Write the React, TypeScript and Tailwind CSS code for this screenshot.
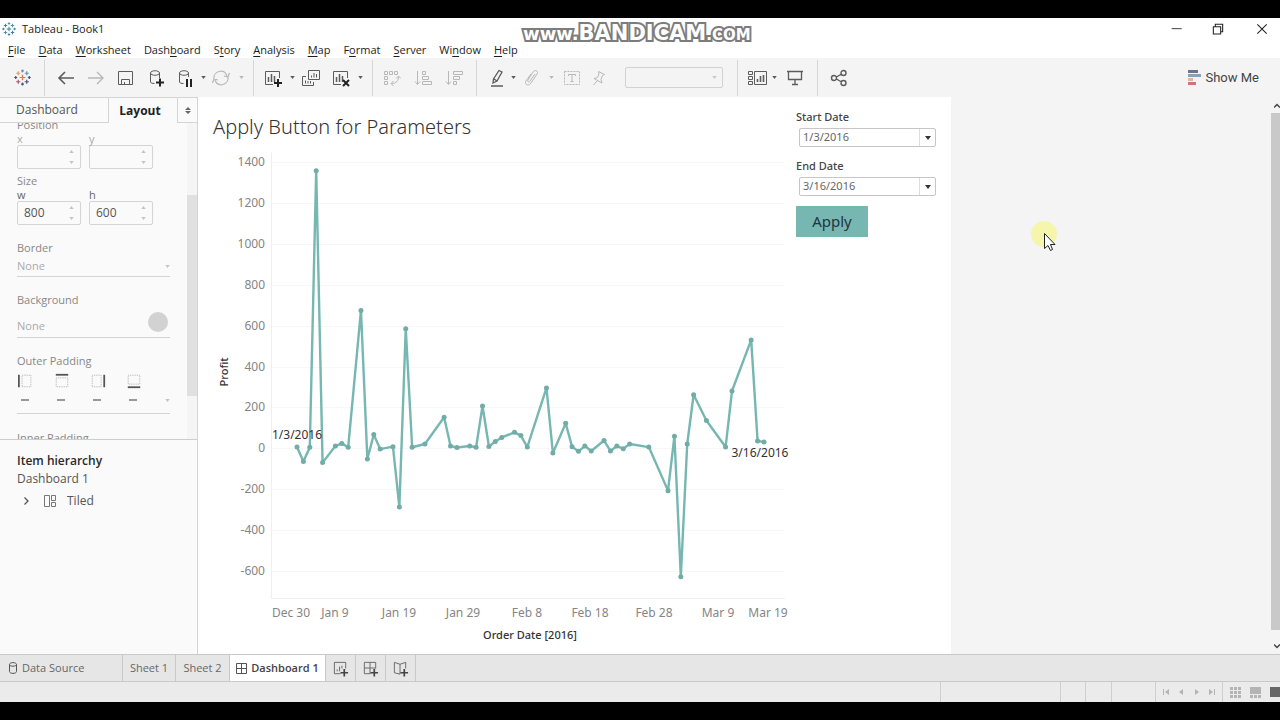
import type { ReactNode } from "react";

const menus = [
  ["", "F", "ile"],
  ["", "D", "ata"],
  ["", "W", "orksheet"],
  ["Dash", "b", "oard"],
  ["S", "t", "ory"],
  ["", "A", "nalysis"],
  ["", "M", "ap"],
  ["F", "o", "rmat"],
  ["", "S", "erver"],
  ["Wi", "n", "dow"],
  ["", "H", "elp"],
];

// [days since Jan 3, profit]
const profit: [number, number][] = [
  [0, 6], [1, -65], [2, 5], [3, 1357], [4, -70], [6, 11], [7, 24], [8, 5], [10, 674], [11, -52],
  [12, 67], [13, -4], [15, 8], [16, -287], [17, 585], [18, 5], [20, 21], [23, 152], [24, 11], [25, 4],
  [27, 11], [28, 5], [29, 207], [30, 9], [31, 33], [32, 53], [34, 78], [35, 62], [36, 6], [39, 295],
  [40, -23], [42, 122], [43, 8], [44, -15], [45, 11], [46, -13], [48, 38], [49, -13], [50, 11], [51, -2],
  [52, 21], [55, 6], [58, -207], [59, 59], [60, -628], [61, 21], [62, 262], [64, 136], [67, 6], [68, 280],
  [71, 530], [72, 36], [73, 31],
];

const yTicks = [1400, 1200, 1000, 800, 600, 400, 200, 0, -200, -400, -600];
const xTicks: [string, number][] = [
  ["Dec 30", 78],
  ["Jan 9", 122],
  ["Jan 19", 186],
  ["Jan 29", 250],
  ["Feb 8", 314],
  ["Feb 18", 377],
  ["Feb 28", 441],
  ["Mar 9", 505],
  ["Mar 19", 555],
];

const px = (day: number) => 84 + day * 6.397;
const py = (value: number) => 298.3 - value * 0.2045;

function Icon({ size = 18, className = "", children }: { size?: number; className?: string; children: ReactNode }) {
  return (
    <svg
      width={size}
      height={size}
      viewBox="0 0 18 18"
      fill="none"
      stroke="currentColor"
      className={`shrink-0 ${className}`}
      aria-hidden="true"
    >
      {children}
    </svg>
  );
}

function Caret({ small = false, className = "" }: { small?: boolean; className?: string }) {
  return (
    <svg
      width={small ? 5 : 6}
      height={small ? 3 : 4}
      viewBox="0 0 6 4"
      fill="currentColor"
      className={`shrink-0 ${className}`}
      aria-hidden="true"
    >
      <path d="M0 0h6L3 4z" />
    </svg>
  );
}

function Tool({ label, width = "w-[30px]", faded = false, children }: { label: string; width?: string; faded?: boolean; children: ReactNode }) {
  return (
    <button
      type="button"
      aria-label={label}
      disabled={faded}
      className={`flex h-8 shrink-0 items-center justify-center ${width} ${faded ? "text-[#b8b8b8]" : "text-[#5c5c5c]"}`}
    >
      {children}
    </button>
  );
}

function Group({ className, children }: { className: string; children: ReactNode }) {
  return <div className={`flex h-9 shrink-0 items-center border-l border-[#d6d6d6] ${className}`}>{children}</div>;
}

function Logo({ size, colors }: { size: number; colors: string[] }) {
  const plus = (x: number, y: number, r: number, c: string) => (
    <path key={`${x}-${y}`} d={`M${x - r} ${y}h${r * 2}M${x} ${y - r}v${r * 2}`} stroke={c} strokeWidth="1.300" />
  );
  return (
    <Icon size={size}>
      {plus(9, 9, 3, colors[0])}
      {plus(4.5, 4.5, 2.2, colors[1])}
      {plus(13.5, 4.5, 2.2, colors[2])}
      {plus(4.5, 13.5, 2.2, colors[3])}
      {plus(13.5, 13.5, 2.2, colors[4])}
      {plus(9, 2, 1.6, colors[2])}
      {plus(9, 16, 1.6, colors[4])}
      {plus(1.8, 9, 1.6, colors[4])}
      {plus(16.2, 9, 1.6, colors[4])}
    </Icon>
  );
}

function TitleBar() {
  return (
    <div className="relative flex h-[22px] shrink-0 items-center bg-white pl-[2px]">
      <Logo size={14} colors={["#3f7fa8", "#3f7fa8", "#4f93ad", "#4f93ad", "#3f7fa8"]} />
      <h1 className="ml-1.5 text-[11px] text-[#222]">Tableau - Book1</h1>
      <div className="absolute top-[3px] left-[523px] flex items-baseline font-['DejaVu_Sans'] font-bold whitespace-nowrap text-white [paint-order:stroke_fill] [-webkit-text-stroke:4px_#7c7c7c]">
        <span className="text-[18px] leading-6">www.</span>
        <span className="text-[21px] leading-6">BANDICAM</span>
        <span className="text-[15px] leading-6">.COM</span>
      </div>
      <div className="ml-auto flex items-center text-[#222]">
        <button type="button" aria-label="Minimize" className="flex w-[42px] justify-center">
          <Icon size={12}><path d="M1 8.500h15" strokeWidth="1.300" /></Icon>
        </button>
        <button type="button" aria-label="Restore" className="flex w-10 justify-center">
          <Icon size={12}><path d="M2 5.500h11v11H2zM5 5V2h11v11h-3" strokeWidth="1.600" /></Icon>
        </button>
        <button type="button" aria-label="Close" className="mr-3 flex w-[30px] justify-end">
          <Icon size={12}><path d="M2 2l14 14M16 2L2 16" strokeWidth="1.600" /></Icon>
        </button>
      </div>
    </div>
  );
}

function MenuBar() {
  return (
    <nav className="flex h-[18px] shrink-0 items-center gap-[13px] bg-white pt-0.5 pl-2 text-[11px] text-[#1c1c1c]">
      {menus.map(([before, key, after]) => (
        <button key={before + key + after} type="button" className="leading-4">
          {before}
          <span className="underline underline-offset-2">{key}</span>
          {after}
        </button>
      ))}
    </nav>
  );
}

const sheetBars = "M4.500 13V8M7.500 13V5M10.500 13V7";

function Toolbar() {
  return (
    <div className="flex h-[39px] shrink-0 items-center bg-[#f4f4f4]">
      <Tool label="Start page" width="w-[44px]">
        <Logo size={17} colors={["#e8762d", "#d9a05f", "#6f93ae", "#a8586a", "#4c5580"]} />
      </Tool>
      <Group className="pr-[6px] pl-[6px]">
        <Tool label="Back"><Icon><path d="M17 9H2M8 3L2 9l6 6" strokeWidth="1.600" /></Icon></Tool>
        <Tool label="Forward" faded><Icon><path d="M1 9h15M10 3l6 6-6 6" strokeWidth="1.400" /></Icon></Tool>
        <Tool label="Save">
          <Icon><path d="M1.500 2.500h14v13h-14zM4.500 15.500v-5h8v5M7.500 13v2.500" /></Icon>
        </Tool>
        <Tool label="New data source">
          <Icon>
            <path d="M3.500 4v9c0 1 2 1.500 4 1.500M12.500 4v5M3.500 4c0-3 9-3 9 0s-9 3-9 0" />
            <path d="M9 13.500h8M13 9.500v8" stroke="#222" strokeWidth="2" />
          </Icon>
        </Tool>
        <Tool label="Pause updates" width="w-[28px]">
          <Icon>
            <path d="M3.500 4v9c0 1 2 1.500 4 1.500M12.500 4v4M3.500 4c0-3 9-3 9 0s-9 3-9 0" />
            <path d="M11 10v8M15 10v8" stroke="#222" strokeWidth="2" />
          </Icon>
        </Tool>
        <Tool label="Pause options" width="w-2"><Caret small /></Tool>
        <Tool label="Refresh" width="w-[28px]" faded>
          <Icon><path d="M2 10c-1-8 10-11 13-3M16 8c1 8-10 11-13 3M17.500 4l-1.500 4-4-1M.500 14l1.500-4 4 1" strokeWidth="1.200" /></Icon>
        </Tool>
        <Tool label="Refresh options" width="w-3" faded><Caret small /></Tool>
      </Group>
      <Group className="pr-2 pl-1">
        <Tool label="New worksheet">
          <Icon>
            <path d="M9 15.500H1.500v-13h14V9" />
            <path d={sheetBars} strokeWidth="1.500" />
            <path d="M10 14h8M14 10v8" stroke="#222" strokeWidth="2" />
          </Icon>
        </Tool>
        <Tool label="Worksheet options" width="w-2"><Caret small /></Tool>
        <Tool label="Duplicate">
          <Icon><path d="M6.500 1.500h11v9h-11zM4 7.500H.500v9h11V13M9.500 8.500v-2M12 8.500V4M14.500 8.500V5M3.500 14.500v-3M6 14.500V12M8.500 14.500V12" /></Icon>
        </Tool>
        <Tool label="Clear sheet">
          <Icon>
            <path d="M9 15.500H1.500v-13h14V9" />
            <path d={sheetBars} strokeWidth="1.500" />
            <path d="M11 11l6 6M17 11l-6 6" stroke="#222" strokeWidth="2" />
          </Icon>
        </Tool>
        <Tool label="Clear options" width="w-2"><Caret small /></Tool>
      </Group>
      <Group className="pr-2 pl-1">
        <Tool label="Swap rows and columns" faded>
          <Icon><path d="M1.500 2.500h3v3h-3zM6.500 2.500h3v3h-3zM11.500 2.500h3v3h-3zM1.500 7.500h3v3h-3zM1.500 12.500h3v3h-3zM15.500 7.500c0 4-2 7-7 7M13 9.500l2.500-2.500L18 9.500M10.500 12L8 14.500l2.500 2.500" /></Icon>
        </Tool>
        <Tool label="Sort ascending" width="w-[32px]" faded>
          <Icon><path d="M3.500 2v13M1 12.500L3.500 15.500 6 12.500M8.500 2.500h3v3h-3zM8.500 7.500h6v3h-6zM8.500 12.500h9v3h-9z" /></Icon>
        </Tool>
        <Tool label="Sort descending" width="w-[29px]" faded>
          <Icon><path d="M3.500 2v13M1 12.500L3.500 15.500 6 12.500M8.500 2.500h9v3h-9zM8.500 7.500h6v3h-6zM8.500 12.500h3v3h-3z" /></Icon>
        </Tool>
      </Group>
      <Group className="pr-[14px] pl-2">
        <Tool label="Highlight" width="w-[24px]">
          <Icon><path d="M11 1.500l3 1.500-5 9-4 2 .500-4zM6 10l3 2" strokeWidth="1.300" /><path d="M3 17h12" strokeWidth="1.500" /></Icon>
        </Tool>
        <Tool label="Highlight options" width="w-2"><Caret small /></Tool>
        <Tool label="Group members" faded>
          <Icon><path d="M12 5l-5 7c-1 2-3 .500-2-1l5-8c2-3 6-.500 4 2l-6 9c-3 4-7 1-5-2l5-7" /></Icon>
        </Tool>
        <Tool label="Group options" width="w-2" faded><Caret small /></Tool>
        <Tool label="Show mark labels" width="w-[34px]" faded>
          <Icon>
            <path d="M1.500 2.500h15v13h-15z" strokeDasharray="2 1" />
            <path d="M5.500 7V5.500h7V7M9 5.500v7M7.500 12.500h3" />
          </Icon>
        </Tool>
        <Tool label="Fix axes" width="w-5" faded>
          <Icon><path d="M8.500 2.500l6 3-2 1-1.500 4 1 3.500-8-4.500 3.500-1L9 5zM7 12l-3.500 4" /></Icon>
        </Tool>
        <div className="relative ml-4 flex items-center">
          <select aria-label="Fit" disabled className="h-[21px] w-[98px] appearance-none rounded-xs border border-[#d2d2d2] bg-[#f4f4f4]" />
          <Caret small className="pointer-events-none absolute right-[6px] text-[#c8c8c8]" />
        </div>
      </Group>
      <Group className="pr-[5px] pl-2">
        <Tool label="Show or hide cards" width="w-[24px]">
          <svg width="20" height="16" viewBox="0 0 20 16" fill="none" stroke="currentColor" aria-hidden="true" className="shrink-0">
            <path d="M.500 1.500h4v3h-4zM.500 6.500h4v3h-4zM.500 11.500h4v3h-4zM6.500 1.500h12v13h-12z" />
            <path d="M9.500 12V9M12.500 12V6M15.500 12V5" strokeWidth="1.600" />
          </svg>
        </Tool>
        <Tool label="Card options" width="w-2"><Caret small /></Tool>
        <Tool label="Presentation mode" width="w-[34px]">
          <Icon><path d="M1 2.500h16M2.500 2.500v8h13v-8M9 10.500v5M6 15.500h6" strokeWidth="1.300" /></Icon>
        </Tool>
      </Group>
      <Group className="pl-[6px]">
        <Tool label="Share">
          <Icon><path d="M6.500 8l5-3M6.500 10l5 3M6.500 9a2.500 2.500 0 1 1-5 0 2.500 2.500 0 0 1 5 0zM16 4a2.500 2.500 0 1 1-5 0 2.500 2.500 0 0 1 5 0zM16 14a2.500 2.500 0 1 1-5 0 2.500 2.500 0 0 1 5 0z" strokeWidth="1.400" /></Icon>
        </Tool>
      </Group>
      <button type="button" className="mr-[21px] ml-auto flex items-center gap-1 font-['Roboto'] text-[13px] text-[#444]">
        <svg width="14" height="15" viewBox="0 0 14 15" aria-hidden="true">
          <path d="M1 0h10v3H1z" fill="#6f7391" />
          <path d="M1 4h13v3H1z" fill="#86a3bd" />
          <path d="M1 8h5v3H1z" fill="#e6b59b" />
          <path d="M1 12h8v3H1z" fill="#d0737b" />
        </svg>
        Show Me
      </button>
    </div>
  );
}

function NumberField({ label, value, disabled = false }: { label: string; value: string; disabled?: boolean }) {
  return (
    <div className="w-16">
      <label htmlFor={`field-${label}`} className={`block text-[11px] leading-3 ${disabled ? "text-[#aaa]" : "text-[#666]"}`}>
        {label}
      </label>
      <div className="flex h-6 rounded-xs border border-[#d4d4d4]">
        <input
          id={`field-${label}`}
          type="text"
          inputMode="numeric"
          defaultValue={value}
          disabled={disabled}
          className="w-11 min-w-0 pl-1.5 text-[12px] text-[#555]"
        />
        <div className="flex flex-1 flex-col items-center justify-between py-1 text-[#c4c4c4]">
          <button type="button" aria-label={`Increase ${label}`} disabled={disabled}><Caret small className="block rotate-180" /></button>
          <button type="button" aria-label={`Decrease ${label}`} disabled={disabled}><Caret small className="block" /></button>
        </div>
      </div>
    </div>
  );
}

const paddingSides = [
  { side: "Left", bar: "M1 2v14", box: "M4.500 2.500h10v13h-10z" },
  { side: "Top", bar: "M2 2h14", box: "M2.500 5.500h13v10h-13z" },
  { side: "Right", bar: "M16 2v14", box: "M2.500 2.500h10v13h-10z" },
  { side: "Bottom", bar: "M2 16h14", box: "M2.500 2.500h13v10h-13z" },
];

function Sidebar() {
  return (
    <aside className="flex w-[198px] shrink-0 flex-col border-r border-[#d4d4d4] bg-[#fafafa]">
      <div role="tablist" className="z-10 flex h-[26px] shrink-0 border-t border-[#d4d4d4] bg-[#fafafa] text-[12px]">
        <button type="button" role="tab" aria-selected="false" className="w-[109px] border-r border-b border-[#d4d4d4] pr-3.5 text-[#555]">
          Dashboard
        </button>
        <button type="button" role="tab" aria-selected="true" className="w-[68px] pr-1.5 font-bold text-[#222]">
          Layout
        </button>
        <button type="button" aria-label="Collapse pane" className="flex flex-1 flex-col items-center justify-center gap-0.5 border-b border-l border-[#d4d4d4] text-[#666]">
          <svg width="6" height="7" viewBox="0 0 6 7" fill="currentColor" aria-hidden="true">
            <path d="M0 3h6L3 0zM0 4h6L3 7z" />
          </svg>
        </button>
      </div>

      <div className="flex h-[316px] shrink-0 overflow-hidden">
        <div className="-mt-1.5 flex-1 pr-[17px] pl-[17px] text-[11px] leading-4 text-[#888]">
          <p>Position</p>
          <div className="flex gap-2">
            <NumberField label="x" value="" disabled />
            <NumberField label="y" value="" disabled />
          </div>
          <p className="mt-1">Size</p>
          <div className="flex gap-2">
            <NumberField label="w" value="800" />
            <NumberField label="h" value="600" />
          </div>
          <label htmlFor="border-style" className="mt-[15px] block">Border</label>
          <div className="relative flex items-center border-b border-[#d4d4d4]">
            <select id="border-style" disabled className="h-5 w-full appearance-none text-[11px] text-[#aaa] opacity-100">
              <option>None</option>
            </select>
            <Caret small className="pointer-events-none absolute right-0 text-[#c4c4c4]" />
          </div>
          <p className="mt-[15px]">Background</p>
          <button type="button" disabled className="flex h-[30px] w-full items-center justify-between border-b border-[#d4d4d4] pr-0.5 pb-0.5 text-[11px] text-[#aaa]">
            <span className="pt-2">None</span>
            <span className="size-5 rounded-full bg-[#d2d2d2]" />
          </button>
          <p className="mt-[15px]">Outer Padding</p>
          <button type="button" aria-label="Outer padding" className="flex h-[45px] w-full border-b border-[#d4d4d4] pt-1">
            {paddingSides.map(({ side, bar, box }) => (
              <span key={side} className="flex w-9 flex-col items-start gap-2.5">
                <svg width="18" height="16" viewBox="0 0 18 18" fill="none" aria-hidden="true">
                  <path d={box} stroke="#aaa" strokeDasharray="1 1" />
                  <path d={bar} stroke="#555" strokeWidth="2" />
                </svg>
                <span className="ml-1 h-1 border-t-2 border-[#999] pr-2" />
              </span>
            ))}
            <Caret small className="mt-[26px] ml-auto text-[#c4c4c4]" />
          </button>
          <p className="mt-4">Inner Padding</p>
        </div>
        <div className="flex w-2.5 flex-col bg-[#f5f5f5] pt-[72px]">
          <div className="h-[201px] bg-[#e0e0e0]" />
        </div>
      </div>

      <div className="flex-1 border-t border-[#cdcdcd] pt-3 pl-[17px] text-[12px] text-[#555]">
        <h2 className="leading-[18px] font-semibold text-[#2a2a2a]">Item hierarchy</h2>
        <p className="leading-[18px]">Dashboard 1</p>
        <button type="button" className="mt-[3px] flex h-5 items-center">
          <svg width="18" height="10" viewBox="0 0 18 10" fill="none" stroke="#555" strokeWidth="1.300" aria-hidden="true">
            <path d="M7.500 1.500L11 5l-3.500 3.500" />
          </svg>
          <svg width="14" height="14" viewBox="0 0 14 14" fill="none" stroke="#777" className="ml-2" aria-hidden="true">
            <path d="M1.500 1.500h5v11h-5zM8.500 1.500h4v5h-4zM8.500 8.500h4v4h-4z" />
          </svg>
          <span className="ml-2.5">Tiled</span>
        </button>
      </div>
    </aside>
  );
}

function ProfitChart() {
  return (
    <svg width="580" height="500" viewBox="0 0 580 500" role="img" aria-label="Profit by order date" className="block font-['Noto_Sans'] text-[12px]">
      <path d="M58.500 2v446.500H572" fill="none" stroke="#efefef" />
      {yTicks.map((tick) => (
        <g key={tick}>
          <path d={`M59 ${Math.round(py(tick)) + 0.5}H572`} stroke="#f7f7f7" />
          <text x="52" y={Math.round(py(tick)) + 4} textAnchor="end" fill="#858585">{tick}</text>
        </g>
      ))}
      {xTicks.map(([label, x]) => (
        <text key={label} x={x} y="467" textAnchor="middle" fill="#858585">{label}</text>
      ))}
      <text transform="translate(15 222) rotate(-90)" textAnchor="middle" fill="#333" className="text-[11px] font-medium">Profit</text>
      <text x="317" y="489" textAnchor="middle" fill="#333" className="text-[11px] font-medium">Order Date [2016]</text>
      <polyline
        points={profit.map(([day, value]) => `${px(day)},${py(value)}`).join(" ")}
        fill="none"
        stroke="#76b7b2"
        strokeWidth="2.400"
        strokeLinejoin="round"
      />
      {profit.map(([day, value]) => (
        <circle key={day} cx={px(day)} cy={py(value)} r="2.500" fill="#72aca7" />
      ))}
      <text x="84" y="289" textAnchor="middle" fill="#333">1/3/2016</text>
      <text x="547" y="307" textAnchor="middle" fill="#333">3/16/2016</text>
    </svg>
  );
}

function DateParameter({ id, label, value }: { id: string; label: string; value: string }) {
  return (
    <div className="mb-[9px]">
      <label htmlFor={id} className="block text-[11px] leading-5 font-medium text-[#444]">{label}</label>
      <div className="relative mt-px ml-[3px] flex items-center">
        <select id={id} className="h-[19px] w-full appearance-none rounded-xs border border-[#c6c6c6] bg-white pl-[3px] text-[11px] text-[#666]">
          <option>{value}</option>
        </select>
        <span className="pointer-events-none absolute right-px flex h-[17px] w-4 items-center justify-center border-l border-[#ddd] text-[#333]">
          <Caret />
        </span>
      </div>
    </div>
  );
}

function Workspace() {
  return (
    <main className="relative flex min-w-0 flex-1 bg-[#f4f4f4]">
      <section className="flex w-[753px] shrink-0 bg-white pl-[15px] font-['Noto_Sans']">
        <div className="w-[583px]">
          <h2 className="pt-4 pb-2.5 text-[20px] leading-[27px] font-light text-[#333]">Apply Button for Parameters</h2>
          <ProfitChart />
        </div>
        <div className="w-[140px] pt-2.5">
          <DateParameter id="start-date" label="Start Date" value="1/3/2016" />
          <DateParameter id="end-date" label="End Date" value="3/16/2016" />
          <button type="button" className="mt-px h-[31px] w-[72px] bg-[#76b7b2] text-[15px] text-[#234]">Apply</button>
        </div>
      </section>
      <div className="absolute top-[124px] left-[833px] size-[26px] rounded-full bg-[#f5f6ac]" />
      <svg width="12" height="19" viewBox="0 0 12 19" className="absolute top-[136px] left-[846px]" aria-hidden="true">
        <path d="M.500.500v15l3.500-3 2.500 5 2-1-2-5h4.500z" fill="#fff" stroke="#222" />
      </svg>
      <div className="ml-auto flex w-[9px] flex-col items-end overflow-hidden text-[#444]">
        <svg width="6" height="16" viewBox="0 0 6 16" fill="none" stroke="currentColor" strokeWidth="1.500" className="shrink-0" aria-hidden="true">
          <path d="M0 10.500l3-3 3 3" />
        </svg>
        <div className="w-full flex-1 bg-[#c9c9c9]" />
        <svg width="6" height="24" viewBox="0 0 6 24" fill="none" stroke="currentColor" strokeWidth="1.500" className="shrink-0" aria-hidden="true">
          <path d="M0 14.500l3 3 3-3" />
        </svg>
      </div>
    </main>
  );
}

const newTabs = [
  { label: "New Worksheet", path: "M9 14.500H2.500v-12h12V9M5.500 12v-2M8 12V7M10.500 9V6" },
  { label: "New Dashboard", path: "M9 14.500H2.500v-12h12V9M2.500 8.500h12M8.500 2.500v12" },
  { label: "New Story", path: "M8.500 15l-6-1.500v-11l6 2 6-2V9M8.500 4.500V15" },
];

function SheetTabs() {
  return (
    <div role="tablist" className="flex h-7 shrink-0 border-y border-[#c9c9c9] bg-[#e6e6e6] text-[11px] text-[#666]">
      <button type="button" role="tab" aria-selected="false" className="flex w-[123px] items-center border-r border-[#c9c9c9] pl-2">
        <svg width="10" height="12" viewBox="0 0 10 12" fill="none" stroke="#555" aria-hidden="true">
          <path d="M1.500 2.500v7c0 2.500 7 2.500 7 0v-7c0-2.500-7-2.500-7 0s7 2 7 0" />
        </svg>
        <span className="ml-1">Data Source</span>
      </button>
      <button type="button" role="tab" aria-selected="false" className="w-[53px] border-r border-[#c9c9c9]">Sheet 1</button>
      <button type="button" role="tab" aria-selected="false" className="w-[54px] border-r border-[#c9c9c9]">Sheet 2</button>
      <button type="button" role="tab" aria-selected="true" className="flex w-[96px] items-center justify-center gap-1 border-r border-[#c9c9c9] bg-white font-semibold whitespace-nowrap text-[#444]">
        <svg width="11" height="11" viewBox="0 0 11 11" fill="none" stroke="#555" className="shrink-0" aria-hidden="true">
          <path d="M.500.500h10v10H.500zM5.500.500v10M.500 5.500h10" />
        </svg>
        Dashboard 1
      </button>
      {newTabs.map(({ label, path }) => (
        <button key={label} type="button" aria-label={label} className="flex w-[30px] items-center justify-center border-r border-[#c9c9c9]">
          <Icon size={17}>
            <path d={path} />
            <path d="M9 13.500h8M13 9.500v8" stroke="#444" strokeWidth="1.800" />
          </Icon>
        </button>
      ))}
    </div>
  );
}

function StatusBar() {
  return (
    <footer className="flex h-5 shrink-0 justify-end bg-[#ebebeb] text-[#b4b4b4]">
      <div className="w-[120px] border-l border-[#cfcfcf]" />
      <div className="w-[25px] border-l border-[#cfcfcf]" />
      <div className="w-[26px] border-l border-[#cfcfcf]" />
      <div className="w-11 border-l border-[#cfcfcf]" />
      <div className="flex w-[67px] items-center justify-between border-l border-[#cfcfcf] px-1.5">
        {[
          ["First sheet", "M1 1h1v6H1zM7 1v6L3 4z"],
          ["Previous sheet", "M6 1v6L2 4z"],
          ["Next sheet", "M2 1v6l4-3z"],
          ["Last sheet", "M1 1v6l4-3zM6 1h1v6H6z"],
        ].map(([label, d]) => (
          <button key={label} type="button" aria-label={label}>
            <svg width="8" height="8" viewBox="0 0 8 8" fill="currentColor" className="block" aria-hidden="true"><path d={d} /></svg>
          </button>
        ))}
      </div>
      <div className="flex w-[58px] items-center gap-[9px] border-l border-[#cfcfcf] pl-[7px]">
        <button type="button" aria-label="Show sheet sorter">
          <svg width="11" height="11" viewBox="0 0 11 11" fill="currentColor" className="block" aria-hidden="true">
            <path d="M0 0h3v3H0zM4 0h3v3H4zM8 0h3v3H8zM0 4h3v3H0zM4 4h3v3H4zM8 4h3v3H8zM0 8h3v3H0zM4 8h3v3H4zM8 8h3v3H8z" />
          </svg>
        </button>
        <button type="button" aria-label="Show filmstrip">
          <svg width="11" height="11" viewBox="0 0 11 11" fill="currentColor" className="block" aria-hidden="true">
            <path d="M0 0h11v7H0zM0 8h3v3H0zM4 8h3v3H4zM8 8h3v3H8z" />
          </svg>
        </button>
        <button type="button" aria-label="Show tabs" className="h-2.5 flex-1 bg-[#666]" />
      </div>
    </footer>
  );
}

export default function App() {
  return (
    <div className="flex min-h-screen flex-col bg-black py-[18px] font-['Open_Sans',sans-serif]">
      <TitleBar />
      <MenuBar />
      <Toolbar />
      <div className="flex flex-1">
        <Sidebar />
        <Workspace />
      </div>
      <SheetTabs />
      <StatusBar />
    </div>
  );
}
